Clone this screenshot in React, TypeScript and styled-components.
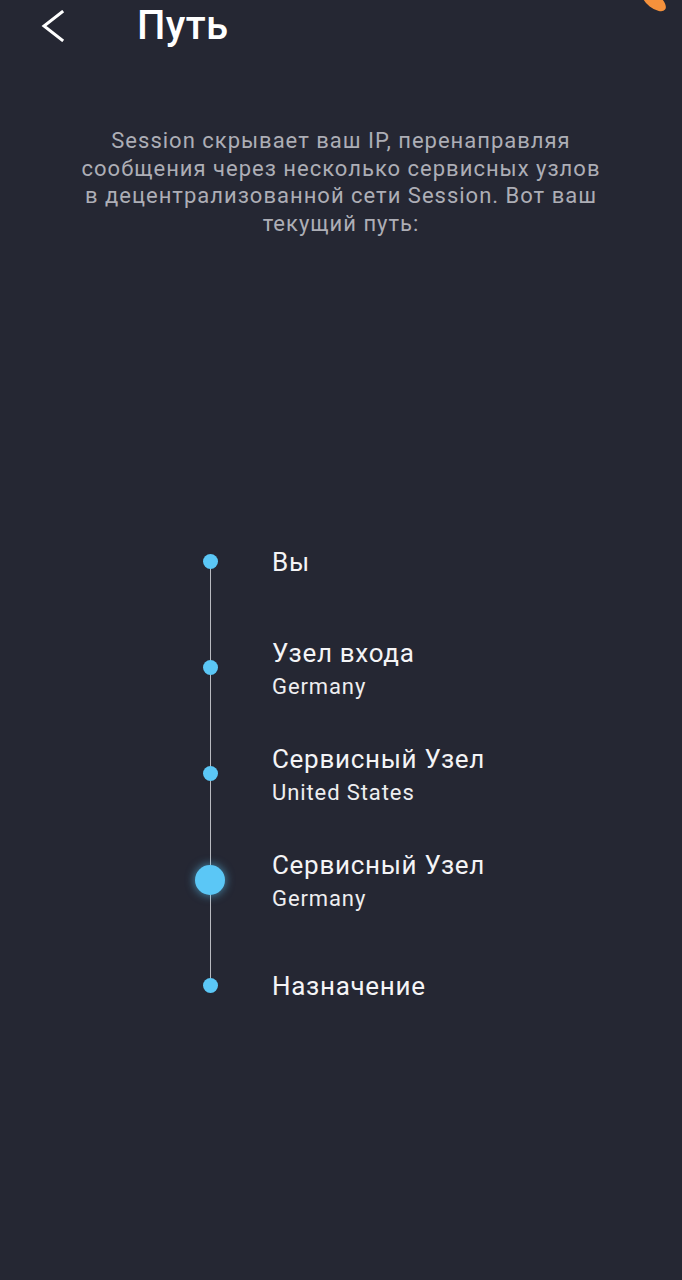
import React from "react";
import styled, { createGlobalStyle, css } from "styled-components";

const GlobalStyle = createGlobalStyle`
  html, body {
    margin: 0;
    padding: 0;
    background: #252733;
  }
  body {
    font-family: Roboto, "Noto Sans", "Liberation Sans", sans-serif;
    -webkit-font-smoothing: antialiased;
  }
`;

const Page = styled.div`
  position: relative;
  width: 682px;
  min-height: 1280px;
  background: #252733;
  color: #ffffff;
  overflow: hidden;
`;

const Header = styled.header`
  height: 52px;
  display: flex;
  align-items: center;
`;

const BackButton = styled.button`
  width: 40px;
  height: 40px;
  margin-left: 33px;
  padding: 0;
  border: none;
  background: transparent;
  display: flex;
  align-items: center;
  justify-content: center;
  cursor: pointer;
`;

const Title = styled.h1`
  margin: 0 0 0 64px;
  font-size: 40px;
  line-height: 48px;
  font-weight: 500;
  color: #ffffff;
  letter-spacing: 0.4px;
`;

const EditBlob = styled.svg`
  position: absolute;
  top: -5px;
  right: 10px;
`;

const Description = styled.p`
  margin: 75px 0 0;
  padding: 0 75px;
  text-align: center;
  font-size: 22px;
  line-height: 27.7px;
  letter-spacing: 1px;
  color: #adaeb6;
`;

const PathList = styled.ol`
  list-style: none;
  margin: 271px 0 0;
  padding: 0 0 0 195px;
`;

const Row = styled.li`
  display: grid;
  grid-template-columns: 30px 1fr;
  column-gap: 47px;
  height: 106px;
  align-items: center;
`;

const DotCell = styled.div<{ $first?: boolean; $last?: boolean }>`
  position: relative;
  height: 100%;
  display: flex;
  align-items: center;
  justify-content: center;

  &::before,
  &::after {
    content: "";
    position: absolute;
    left: 50%;
    width: 1px;
    margin-left: -0.5px;
    height: 50%;
    background: #b9bac0;
  }
  &::before {
    top: 0;
    display: ${(p) => (p.$first ? "none" : "block")};
  }
  &::after {
    bottom: 0;
    display: ${(p) => (p.$last ? "none" : "block")};
  }
`;

const Dot = styled.span<{ $active?: boolean }>`
  position: relative;
  z-index: 1;
  display: block;
  border-radius: 50%;
  background: #5bc7f6;
  ${(p) =>
    p.$active
      ? css`
          width: 30px;
          height: 30px;
          box-shadow: 0 0 8px 1px rgba(91, 199, 246, 0.55);
        `
      : css`
          width: 15px;
          height: 15px;
        `}
`;

const Labels = styled.div<{ $single?: boolean }>`
  display: flex;
  flex-direction: column;
  gap: 5px;
  margin-top: ${(p) => (p.$single ? "1px" : "4px")};
`;

const NodeTitle = styled.span`
  font-size: 26px;
  line-height: 30px;
  letter-spacing: 0.7px;
  color: #f4f4f6;
`;

const NodeSubtitle = styled.span`
  font-size: 22px;
  line-height: 28px;
  letter-spacing: 0.9px;
  color: #eeeef0;
`;

const nodes: { title: string; subtitle?: string; active?: boolean }[] = [
  { title: "Вы" },
  { title: "Узел входа", subtitle: "Germany" },
  { title: "Сервисный Узел", subtitle: "United States" },
  { title: "Сервисный Узел", subtitle: "Germany", active: true },
  { title: "Назначение" },
];

export default function App() {
  return (
    <Page>
      <GlobalStyle />
      <EditBlob width="40" height="22" viewBox="0 0 40 22">
        <ellipse cx="22" cy="6" rx="14" ry="7" transform="rotate(38 22 6)" fill="#f5913c" />
      </EditBlob>
      <Header>
        <BackButton aria-label="Назад">
          <svg width="24" height="32" viewBox="0 0 24 32">
            <path d="M21 2 L3 16 L21 30" fill="none" stroke="#ffffff" strokeWidth="3" strokeLinecap="square" strokeLinejoin="miter" />
          </svg>
        </BackButton>
        <Title>Путь</Title>
      </Header>
      <Description>
        Session скрывает ваш IP, перенаправляя сообщения через несколько сервисных узлов в
        децентрализованной сети Session. Вот ваш текущий путь:
      </Description>
      <PathList>
        {nodes.map((n, i) => (
          <Row key={i}>
            <DotCell $first={i === 0} $last={i === nodes.length - 1}>
              <Dot $active={n.active} />
            </DotCell>
            <Labels $single={!n.subtitle}>
              <NodeTitle>{n.title}</NodeTitle>
              {n.subtitle && <NodeSubtitle>{n.subtitle}</NodeSubtitle>}
            </Labels>
          </Row>
        ))}
      </PathList>
    </Page>
  );
}
